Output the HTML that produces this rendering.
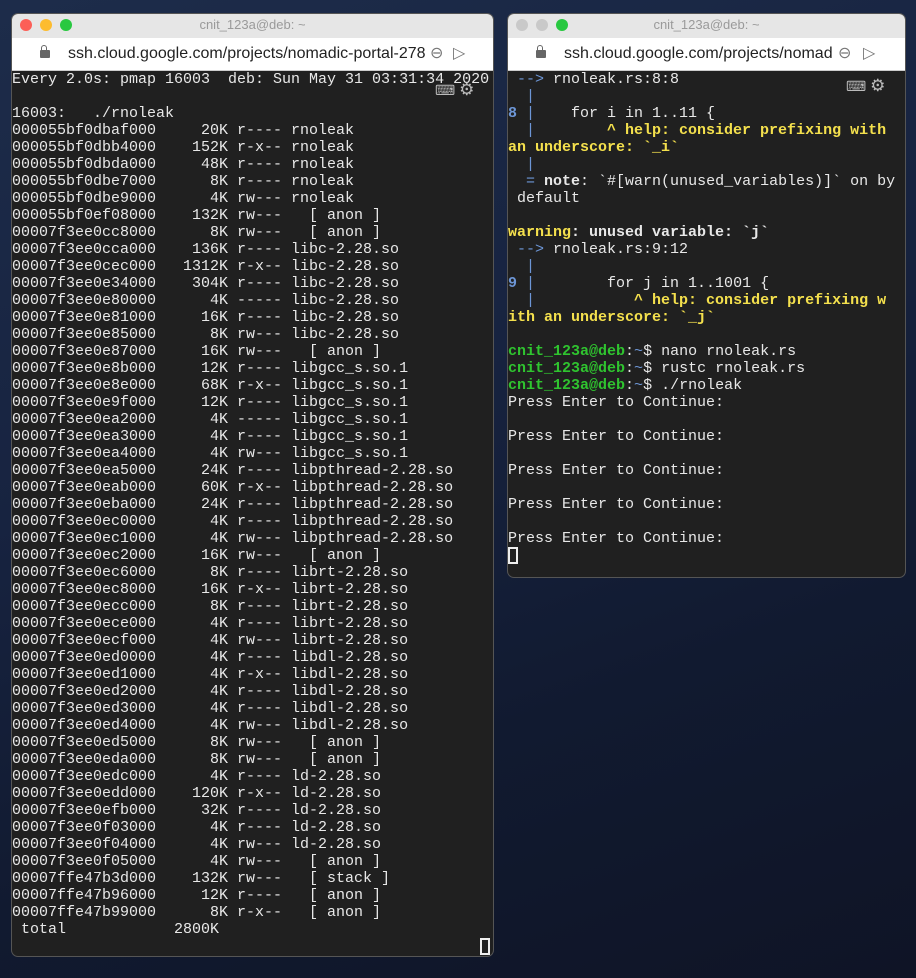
<!DOCTYPE html>
<html><head><style>
body{margin:0;width:916px;height:978px;background:linear-gradient(160deg,#1d2c4a 0%,#172340 40%,#111a30 70%,#0f1426 100%);position:relative;overflow:hidden;font-family:"Liberation Sans",sans-serif}
.win{position:absolute;border-radius:6px;overflow:hidden;background:#202020;box-shadow:0 0 0 1px #555}
.tb{height:24px;background:#e6e6e6;position:relative;text-align:center;font-size:13px;color:#9a9a9a;line-height:22px}
.dot{position:absolute;top:5px;width:12px;height:12px;border-radius:50%}
.url{height:32px;background:#fff;border-bottom:1px solid #ccc;position:relative;font-size:16px;color:#222;line-height:32px;white-space:nowrap;overflow:hidden}
.lock{position:absolute;left:28px;top:12px;width:10px;height:8px;background:#666;border-radius:1px}
.lock:before{content:"";position:absolute;left:1px;top:-5px;width:4px;height:5px;border:1.5px solid #666;border-bottom:none;border-radius:3px 3px 0 0}
.term{position:absolute;left:0;right:0;font-family:"Liberation Mono",monospace;font-size:15px;line-height:17px;color:#e8e8e8;white-space:pre}
.y{color:#f4e04d;font-weight:bold}.b{color:#6d96d6}.g{color:#2fc42f;font-weight:bold}.w{font-weight:bold}
.cur{display:inline-block;width:6px;height:13px;border:2px solid #eee;vertical-align:-2px}
</style></head><body>
<div class="win" style="left:12px;top:14px;width:481px;height:942px">
<div class="tb"><span class="dot" style="left:8px;background:#fc5f57"></span><span class="dot" style="left:28px;background:#fdbc2e"></span><span class="dot" style="left:48px;background:#28c840"></span>cnit_123a@deb: ~</div>
<div class="url"><div class="lock"></div><span style="position:absolute;left:56px">ssh.cloud.google.com/projects/nomadic-portal-278</span><span style="position:absolute;left:418px;color:#777">⊖</span><span style="position:absolute;left:441px;color:#777">▷</span></div>
<div class="term" style="top:57px">Every 2.0s: pmap 16003  deb: Sun May 31 03:31:34 2020

16003:   ./rnoleak
000055bf0dbaf000     20K r---- rnoleak
000055bf0dbb4000    152K r-x-- rnoleak
000055bf0dbda000     48K r---- rnoleak
000055bf0dbe7000      8K r---- rnoleak
000055bf0dbe9000      4K rw--- rnoleak
000055bf0ef08000    132K rw---   [ anon ]
00007f3ee0cc8000      8K rw---   [ anon ]
00007f3ee0cca000    136K r---- libc-2.28.so
00007f3ee0cec000   1312K r-x-- libc-2.28.so
00007f3ee0e34000    304K r---- libc-2.28.so
00007f3ee0e80000      4K ----- libc-2.28.so
00007f3ee0e81000     16K r---- libc-2.28.so
00007f3ee0e85000      8K rw--- libc-2.28.so
00007f3ee0e87000     16K rw---   [ anon ]
00007f3ee0e8b000     12K r---- libgcc_s.so.1
00007f3ee0e8e000     68K r-x-- libgcc_s.so.1
00007f3ee0e9f000     12K r---- libgcc_s.so.1
00007f3ee0ea2000      4K ----- libgcc_s.so.1
00007f3ee0ea3000      4K r---- libgcc_s.so.1
00007f3ee0ea4000      4K rw--- libgcc_s.so.1
00007f3ee0ea5000     24K r---- libpthread-2.28.so
00007f3ee0eab000     60K r-x-- libpthread-2.28.so
00007f3ee0eba000     24K r---- libpthread-2.28.so
00007f3ee0ec0000      4K r---- libpthread-2.28.so
00007f3ee0ec1000      4K rw--- libpthread-2.28.so
00007f3ee0ec2000     16K rw---   [ anon ]
00007f3ee0ec6000      8K r---- librt-2.28.so
00007f3ee0ec8000     16K r-x-- librt-2.28.so
00007f3ee0ecc000      8K r---- librt-2.28.so
00007f3ee0ece000      4K r---- librt-2.28.so
00007f3ee0ecf000      4K rw--- librt-2.28.so
00007f3ee0ed0000      4K r---- libdl-2.28.so
00007f3ee0ed1000      4K r-x-- libdl-2.28.so
00007f3ee0ed2000      4K r---- libdl-2.28.so
00007f3ee0ed3000      4K r---- libdl-2.28.so
00007f3ee0ed4000      4K rw--- libdl-2.28.so
00007f3ee0ed5000      8K rw---   [ anon ]
00007f3ee0eda000      8K rw---   [ anon ]
00007f3ee0edc000      4K r---- ld-2.28.so
00007f3ee0edd000    120K r-x-- ld-2.28.so
00007f3ee0efb000     32K r---- ld-2.28.so
00007f3ee0f03000      4K r---- ld-2.28.so
00007f3ee0f04000      4K rw--- ld-2.28.so
00007f3ee0f05000      4K rw---   [ anon ]
00007ffe47b3d000    132K rw---   [ stack ]
00007ffe47b96000     12K r----   [ anon ]
00007ffe47b99000      8K r-x--   [ anon ]
 total            2800K</div>
<span class="cur" style="position:absolute;left:468px;top:924px"></span>
<div style="position:absolute;left:423px;top:66px;color:#bbb;font-size:14px">⌨ <span style="font-size:17px">⚙</span></div>
</div>

<div class="win" style="left:508px;top:14px;width:397px;height:563px">
<div class="tb"><span class="dot" style="left:8px;background:#c9c9c9"></span><span class="dot" style="left:28px;background:#c9c9c9"></span><span class="dot" style="left:48px;background:#28c840"></span>cnit_123a@deb: ~</div>
<div class="url"><div class="lock"></div><span style="position:absolute;left:56px">ssh.cloud.google.com/projects/nomad</span><span style="position:absolute;left:330px;color:#777">⊖</span><span style="position:absolute;left:355px;color:#777">▷</span></div>
<div class="term" style="top:57px"><span class="b"> --&gt;</span> rnoleak.rs:8:8
<span class="b">  |</span>
<span class="b" style="font-weight:bold">8</span><span class="b"> |</span>    for i in 1..11 {
<span class="b">  |</span>        <span class="y">^ help: consider prefixing with</span>
<span class="y">an underscore: `_i`</span>
<span class="b">  |</span>
<span class="b">  =</span> <span class="w">note</span>: `#[warn(unused_variables)]` on by
 default

<span class="y">warning</span><span class="w">: unused variable: `j`</span>
<span class="b"> --&gt;</span> rnoleak.rs:9:12
<span class="b">  |</span>
<span class="b" style="font-weight:bold">9</span><span class="b"> |</span>        for j in 1..1001 {
<span class="b">  |</span>           <span class="y">^ help: consider prefixing w</span>
<span class="y">ith an underscore: `_j`</span>

<span class="g">cnit_123a@deb</span>:<span class="b">~</span>$ nano rnoleak.rs
<span class="g">cnit_123a@deb</span>:<span class="b">~</span>$ rustc rnoleak.rs
<span class="g">cnit_123a@deb</span>:<span class="b">~</span>$ ./rnoleak
Press Enter to Continue:

Press Enter to Continue:

Press Enter to Continue:

Press Enter to Continue:

Press Enter to Continue:
<span class="cur"></span></div>
<div style="position:absolute;left:338px;top:62px;color:#bbb;font-size:14px">⌨ <span style="font-size:17px">⚙</span></div>
</div>
</body></html>
